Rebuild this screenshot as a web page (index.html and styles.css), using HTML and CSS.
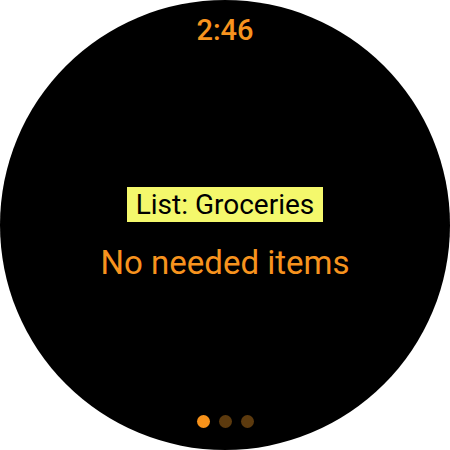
FILE: index.html
```html
<!DOCTYPE html>
<html>
<head>
<meta charset="utf-8">
<link rel="stylesheet" href="styles.css">
</head>
<body>
<div class="watch">
  <div class="time">2:46</div>
  <div class="content">
    <div class="label">List: Groceries</div>
    <div class="empty">No needed items</div>
  </div>
  <div class="dots">
    <span class="dot active"></span>
    <span class="dot"></span>
    <span class="dot"></span>
  </div>
</div>
</body>
</html>
```
FILE: styles.css
```css
html, body {
  margin: 0;
  padding: 0;
  background: #ffffff;
}
body {
  width: 450px;
  height: 450px;
  font-family: Roboto, "Liberation Sans", sans-serif;
}
.watch {
  width: 450px;
  height: 450px;
  border-radius: 50%;
  background: #000;
  display: flex;
  flex-direction: column;
  align-items: center;
  overflow: hidden;
}
.time {
  margin-top: 12px;
  color: #f7931e;
  font-size: 29px;
  font-weight: 500;
  line-height: 36px;
}
.content {
  flex: 1;
  display: flex;
  flex-direction: column;
  align-items: center;
  justify-content: center;
  padding-top: 8px;
}
.label {
  background: #f4f86c;
  color: #000;
  font-size: 28px;
  line-height: 35px;
  padding: 0 9px;
}
.empty {
  color: #f7931e;
  font-size: 33px;
  line-height: 44px;
  margin-top: 19px;
}
.dots {
  display: flex;
  gap: 9px;
  margin-bottom: 22px;
}
.dot {
  width: 13px;
  height: 13px;
  border-radius: 50%;
  background: #5c3a0e;
}
.dot.active {
  background: #f7921a;
}
```
